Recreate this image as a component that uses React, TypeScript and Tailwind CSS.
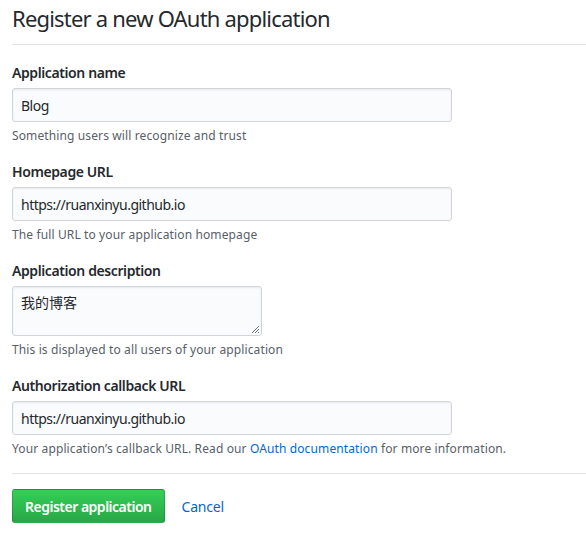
const Field = ({
  label,
  value,
  note,
}: {
  label: string;
  value: string;
  note: React.ReactNode;
}) => (
  <div className="flex flex-col">
    <label className="text-[14px] leading-[21px] font-semibold tracking-[-0.4px] text-[#24292e]">
      {label}
    </label>
    <div className="mt-[5px] w-[440px] h-[34px] px-2 flex items-center bg-[#fafbfc] border border-[#d1d5da] rounded-[3px] text-[14px] tracking-[-0.5px] text-[#24292e] shadow-[inset_0_1px_2px_rgba(27,31,35,0.075)]">
      {value}
    </div>
    <p className="mt-[5px] text-[12px] leading-[18px] tracking-[0.12px] text-[#586069]">
      {note}
    </p>
  </div>
);

export default function App() {
  return (
    <div
      className="w-[586px] h-[539px] overflow-hidden bg-white pl-3"
      style={{ fontFamily: '"Noto Sans", "Noto Sans CJK SC", sans-serif' }}
    >
      <div className="border-b border-[#e1e4e8] pb-2">
        <h1 className="text-[22px] leading-[36px] font-normal tracking-[-0.8px] text-[#24292e]">
          Register a new OAuth application
        </h1>
      </div>

      <div className="mt-[17px] flex flex-col gap-4">
        <Field
          label="Application name"
          value="Blog"
          note="Something users will recognize and trust"
        />
        <Field
          label="Homepage URL"
          value="https://ruanxinyu.github.io"
          note="The full URL to your application homepage"
        />
        <div className="flex flex-col">
          <label className="text-[14px] leading-[21px] font-semibold tracking-[-0.4px] text-[#24292e]">
            Application description
          </label>
          <div className="relative mt-[5px] w-[250px] h-[50px] px-2 pt-[6px] bg-[#fafbfc] border border-[#d1d5da] rounded-[3px] text-[14px] leading-[20px] text-[#24292e] shadow-[inset_0_1px_2px_rgba(27,31,35,0.075)]">
            我的博客
            <svg
              className="absolute right-[1px] bottom-[1px]"
              width="9"
              height="9"
              viewBox="0 0 9 9"
            >
              <path d="M8 1L1 8M8 4L4 8M8 7L7 8" stroke="#6a737d" strokeWidth="1" />
            </svg>
          </div>
          <p className="mt-[5px] text-[12px] leading-[18px] tracking-[0.12px] text-[#586069]">
            This is displayed to all users of your application
          </p>
        </div>
        <Field
          label="Authorization callback URL"
          value="https://ruanxinyu.github.io"
          note={
            <>
              Your application’s callback URL. Read our{" "}
              <span className="text-[#0366d6]">OAuth documentation</span> for
              more information.
            </>
          }
        />
      </div>

      <div className="mt-[15px] border-t border-[#e1e4e8] pt-[15px] flex items-center">
        <button className="h-[34px] px-3 rounded-[3px] border border-[rgba(27,31,35,0.2)] bg-gradient-to-b from-[#34d058] to-[#28a745] text-white text-[14px] font-semibold tracking-[-0.5px]">
          Register application
        </button>
        <span className="ml-[17px] text-[14px] tracking-[-0.2px] text-[#0366d6]">
          Cancel
        </span>
      </div>
    </div>
  );
}
